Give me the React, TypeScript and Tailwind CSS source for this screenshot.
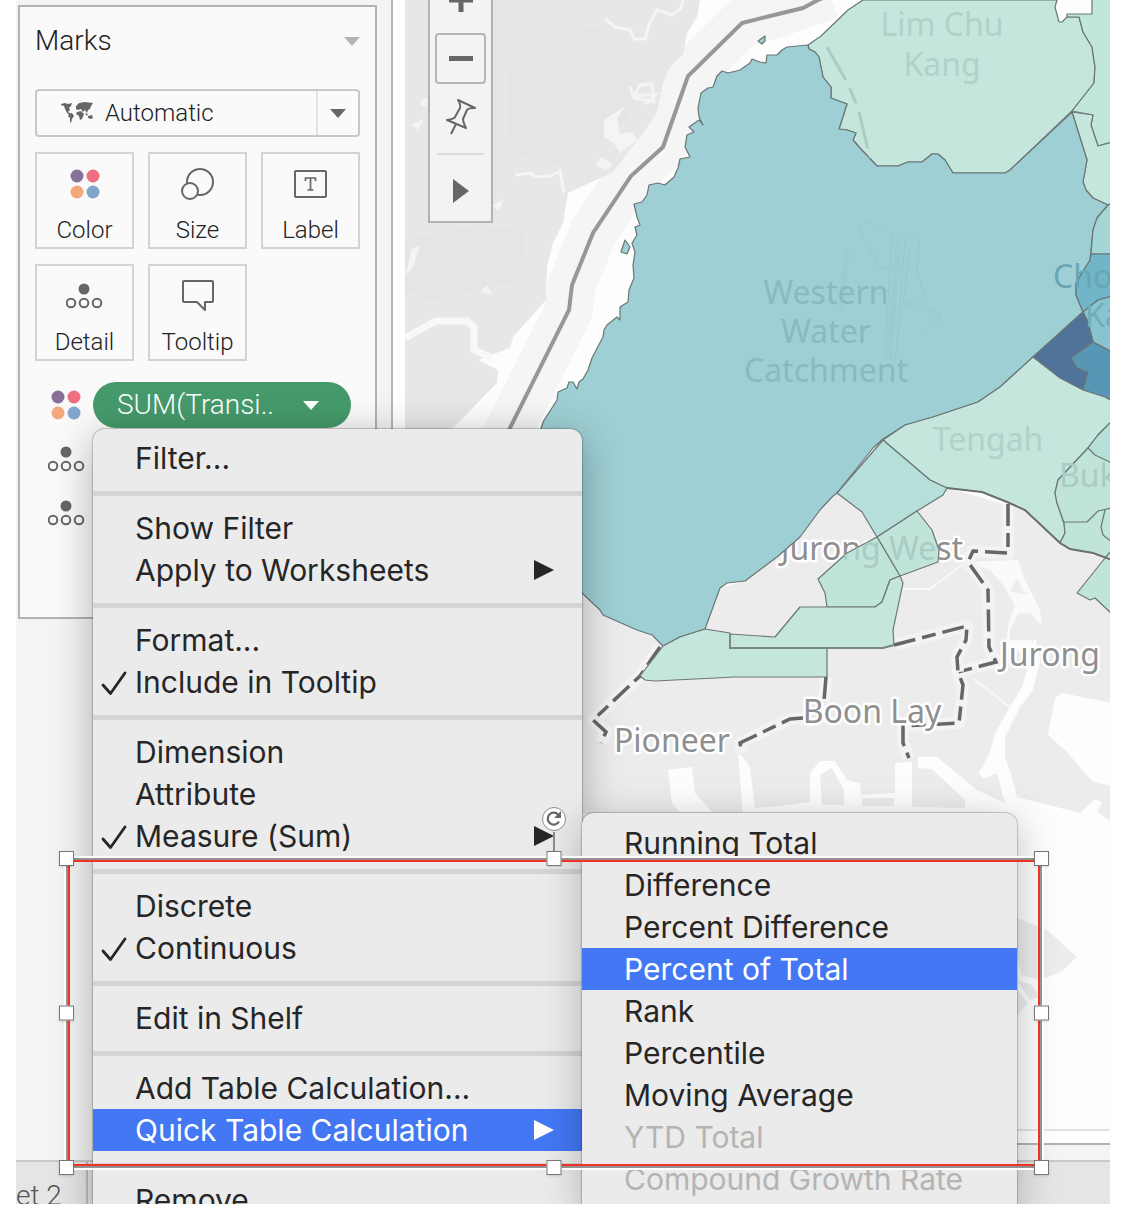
import React, { useState } from 'react';

interface MenuEntry {
  label: string;
  checked?: boolean;
  submenu?: boolean;
  disabled?: boolean;
}

const menuGroups: MenuEntry[][] = [
  [{ label: 'Filter...' }],
  [{ label: 'Show Filter' }, { label: 'Apply to Worksheets', submenu: true }],
  [{ label: 'Format...' }, { label: 'Include in Tooltip', checked: true }],
  [{ label: 'Dimension' }, { label: 'Attribute' }, { label: 'Measure (Sum)', checked: true, submenu: true }],
  [{ label: 'Discrete' }, { label: 'Continuous', checked: true }],
  [{ label: 'Edit in Shelf' }],
  [{ label: 'Add Table Calculation...' }, { label: 'Quick Table Calculation', submenu: true }],
  [{ label: 'Remove' }],
];

const calculations: MenuEntry[] = [
  { label: 'Running Total' },
  { label: 'Difference' },
  { label: 'Percent Difference' },
  { label: 'Percent of Total' },
  { label: 'Rank' },
  { label: 'Percentile' },
  { label: 'Moving Average' },
  { label: 'YTD Total', disabled: true },
  { label: 'Compound Growth Rate', disabled: true },
];

const ColorIcon = () => (
  <svg width="30" height="30" viewBox="0 0 30 30" aria-hidden="true">
    <circle cx="7" cy="7" r="6.5" fill="#866f98" />
    <circle cx="23" cy="7" r="6.5" fill="#ee6f80" />
    <circle cx="7" cy="23" r="6.5" fill="#f2a77d" />
    <circle cx="23" cy="23" r="6.5" fill="#82a5cb" />
  </svg>
);

const SizeIcon = () => (
  <svg width="34" height="32" viewBox="0 0 34 32" fill="none" stroke="#666" strokeWidth="2" aria-hidden="true">
    <circle cx="19" cy="14" r="13" />
    <circle cx="9" cy="23" r="8" fill="#fafafa" />
  </svg>
);

const LabelIcon = () => (
  <svg width="34" height="30" viewBox="0 0 34 30" fill="none" stroke="#666" strokeWidth="2" aria-hidden="true">
    <rect x="1" y="2" width="31" height="26" rx="1" />
    <path d="M11.500 12V9h10v3M16.500 9v12M13.500 21h6" strokeWidth="1.700" />
  </svg>
);

const DetailIcon = () => (
  <svg width="38" height="26" viewBox="0 0 38 26" fill="none" stroke="#666" strokeWidth="2" aria-hidden="true">
    <circle cx="18" cy="6" r="5.500" fill="#666" stroke="none" />
    <circle cx="5" cy="20" r="4.300" />
    <circle cx="18" cy="20" r="4.300" />
    <circle cx="31" cy="20" r="4.300" />
  </svg>
);

const TooltipIcon = () => (
  <svg width="34" height="32" viewBox="0 0 34 32" fill="none" stroke="#666" strokeWidth="2" strokeLinejoin="round" aria-hidden="true">
    <path d="M3 1h28q1 0 1 1v19q0 1-1 1h-7v8l-8-8H3q-1 0-1-1V2q0-1 1-1z" />
  </svg>
);

const WorldIcon = () => (
  <svg width="32" height="22" viewBox="0 0 32 22" fill="#666" aria-hidden="true">
    <path d="M0 2l4-1 3 1 4-1-1 3-2 2 1 2-2 2 3 2-1 1-3-2-2-4-1-3-3-1zM8 12l3-1 2 3-2 3-1 4-1-1v-4l-2-2zM15 4l3-3 6-1 8 1-2 3-1 3-2 1-1 3-2-3-2 2-2-3-3 1-2-1zM16 10l4-1 3 3-2 5-2 1-1-4-3-2zM27 14l4-1 1 3-2 1-3-1zM24 11l3 1-1 2z" />
  </svg>
);

const CaretDown = ({ className }: { className: string }) => (
  <svg width="16" height="9" viewBox="0 0 16 9" fill="currentColor" className={className} aria-hidden="true">
    <path d="M0 0h16L8 9z" />
  </svg>
);

const Check = () => (
  <svg width="26" height="30" viewBox="0 0 26 30" fill="none" stroke="currentColor" strokeWidth="2.800" strokeLinecap="round" strokeLinejoin="round" aria-hidden="true">
    <path d="M2 18l7.500 8.500L24 6" />
  </svg>
);

const ArrowRight = () => (
  <svg width="20" height="20" viewBox="0 0 20 20" fill="currentColor" aria-hidden="true">
    <path d="M0 0l20 10L0 20z" />
  </svg>
);

const PinIcon = () => (
  <svg width="32" height="38" viewBox="0 0 32 38" fill="none" stroke="#666" strokeWidth="2" strokeLinejoin="round" aria-hidden="true">
    <path d="M13 2l17 8q-7 0-8 2l-4 9q0 3 3 9L2 22q7-1 8-3l5-9q1-3-2-8zM11 26L6 36" />
  </svg>
);

const shelfButtons = [
  { label: 'Color', icon: <ColorIcon /> },
  { label: 'Size', icon: <SizeIcon /> },
  { label: 'Label', icon: <LabelIcon /> },
  { label: 'Detail', icon: <DetailIcon /> },
  { label: 'Tooltip', icon: <TooltipIcon /> },
];

// planning areas, drawn in order with a shared outline
const areas = [
  { fill: '#c4e6dc', points: '808,45 821,36 848,10 863,0 1057,0 1055,7 1059,22 1062,22 1067,17 1079,17 1083,32 1092,47 1095,67 1094,83 1072,111 1010,170 1005,173 953,173 945,160 938,154 932,154 922,162 908,162 898,166 877,166 860,148 853,140 856,133 847,130 839,129 847,104 831,98 831,87 823,77 819,57 815,52 809,49' },
  { fill: '#c1e6da', points: '1092,-2 1092,14 1067,14 1067,17 1079,17 1083,32 1092,47 1095,67 1094,83 1072,111 1093,115 1091,125 1098,146 1112,142 1112,-2' },
  { fill: '#c4e6dc', points: '1072,112 1093,115 1091,125 1098,146 1112,142 1112,205 1108,205 1093,198 1086,190 1083,182 1087,160' },
  { fill: '#9ecfd4', points: '808,45 787,47 782,50 777,55 767,55 766,63 760,62 752,59 750,63 740,70 728,73 722,71 717,76 713,87 708,88 701,93 698,108 699,117 703,125 699,120 689,127 694,132 687,135 685,147 690,157 680,159 678,168 674,177 665,185 658,183 649,185 647,195 642,202 634,204 637,217 640,225 635,227 637,235 632,243 635,252 633,265 634,278 629,290 628,302 620,307 620,320 617,317 607,325 604,330 603,337 592,358 588,370 583,379 579,382 577,389 573,382 569,382 567,388 558,392 557,400 543,422 535,450 560,570 582,593 600,610 603,615 637,630 652,635 663,646 680,637 705,629 720,588 727,583 745,581 777,557 800,537 820,510 832,497 837,493 873,448 883,439 905,425 933,417 978,402 1000,387 1033,357 1083,312 1076,295 1076,283 1090,260 1093,230 1097,218 1108,205 1093,198 1086,190 1083,182 1087,160 1072,112 1010,170 1005,173 953,173 945,160 938,154 932,154 922,162 908,162 898,166 877,166 860,148 853,140 856,133 847,130 839,129 847,104 831,98 831,87 823,77 819,57 815,52 809,49' },
  { fill: '#a3d6d4', points: '1108,205 1112,203 1112,254 1091,254 1093,230 1097,218' },
  { fill: '#70b5c8', points: '1091,254 1112,254 1112,296 1098,300 1083,312 1076,295 1076,283 1090,260' },
  { fill: '#88c4d0', points: '1083,312 1098,300 1112,296 1112,352 1093,342 1088,322' },
  { fill: '#4f7399', points: '1083,312 1088,322 1093,342 1071,358 1077,368 1088,372 1083,390 1060,378 1033,357' },
  { fill: '#5796b5', points: '1093,342 1112,352 1112,400 1083,390 1088,372 1077,368 1071,358' },
  { fill: '#c5e6dc', points: '1033,357 1060,378 1083,390 1105,397 1112,401 1112,421 1098,435 1088,448 1058,480 1055,493 1057,503 1064,523 1065,533 1060,543 1025,510 1007,502 982,492 947,488 930,480 883,440 905,425 933,417 978,402 1000,387' },
  { fill: '#c1e4da', points: '1112,421 1098,435 1088,448 1058,480 1055,493 1057,503 1064,523 1065,533 1060,543 1070,549 1093,553 1112,560' },
  { fill: '#b7dfd9', points: '1112,421 1098,435 1088,448 1095,455 1112,463' },
  { fill: '#c1e4da', points: '1105,558 1077,593 1090,600 1095,598 1112,614 1112,550' },
  { fill: '#b7dfd9', points: '883,440 930,480 947,488 943,495 917,511 877,537 862,512 837,493' },
  { fill: '#c1e4da', points: '917,511 932,530 939,550 938,562 900,576 877,537' },
  { fill: '#c1e4da', points: '877,537 847,553 818,579 825,593 827,607 875,607 882,602 890,580 900,576' },
  { fill: '#c5e6dc', points: '900,576 903,583 893,630 894,645 883,648 730,648 730,634 775,637 800,607 875,607 882,602 890,580' },
  { fill: '#c5e6dc', points: '663,646 680,637 705,629 730,633 730,648 827,648 827,677 735,677 655,681 645,680 640,676' },
  { fill: '#9ecfd4', points: '758,41 765,36 765,41 762,44' },
  { fill: '#9ecfd4', points: '621,252 625,240 630,247 627,254' },
];

const borders = [
  '1064,522 1087,522 1098,511 1112,508',
  '1105,510 1101,527 1103,535 1112,542',
];

const dashes = [
  '1008,504 1008,553 973,551 968,562 988,590 989,647 996,662 958,672 963,685 959,723 903,726 903,743 909,758',
  '894,645 967,626 966,640 957,657 958,672',
  '826,677 824,701',
  '803,718 790,719 740,743 742,753',
  '660,647 640,676 593,720 606,732 601,743',
];

const faintLabels = [
  { x: 942, y: 36, text: 'Lim Chu', fill: '#afd2c9' },
  { x: 942, y: 76, text: 'Kang', fill: '#afd2c9' },
  { x: 826, y: 304, text: 'Western', fill: '#89babf' },
  { x: 826, y: 343, text: 'Water', fill: '#89babf' },
  { x: 826, y: 382, text: 'Catchment', fill: '#89babf' },
  { x: 988, y: 451, text: 'Tengah', fill: '#afd2c9' },
];

const MapCanvas = () => (
  <svg
    viewBox="405 0 705 1129"
    preserveAspectRatio="xMinYMin slice"
    className="block min-h-0 w-full flex-1 bg-[#fdfdfd] font-['Noto_Sans',sans-serif] text-[32px]"
    role="img"
    aria-label="Map of western Singapore"
  >
    <defs>
      <clipPath id="west">
        <path d="M877 537L917 511 932 530 939 550 938 562 900 576 875 607H827L825 593 818 579 847 553z" />
      </clipPath>
    </defs>

    <polyline points="830,-5 770,16 742,23 688,76 663,147 631,176 593,233 572,285 569,310 500,448" fill="none" stroke="#f5f5f5" strokeWidth="48" />
    <path d="M405 0H700L697 17 687 33 683 55 670 67 663 83 657 113 640 137 613 172 568 193 563 223 553 243 547 267 546 300 513 337 510 348 478 360 498 370 497 383 453 428 405 460z" fill="#e7e7e7" />
    <path d="M510 70L558 20 600 30 650 70 620 130 560 165 505 150zM405 240L480 225 525 232 520 280 430 300 405 290z" fill="#e5e5e5" />
    <path d="M405 338L436 321H467L474 327V350L492 358" fill="none" stroke="#f8f8f8" strokeWidth="7" />
    <path d="M515 175L530 173 535 177 550 176 560 171 564 193M605 19L615 27 630 30 634 39H645L650 22 657 10 672 15 681 8 683 0" fill="none" stroke="#f5f5f5" strokeWidth="3" />
    <path d="M604 120L625 106 617 118 620 134 632 132 637 140 620 153 613 142 604 137zM595 165L602 157 613 165 606 170zM493 205L504 199 499 211zM412 125L425 118 418 130zM480 292L487 285 492 295zM421 100L427 98V107L421 106zM406 275L412 248 420 246 414 265z" fill="#f4f4f4" />
    <path d="M630 86L634 98 654 102 652 84 640 85 634 96 656 94 646 104" fill="none" stroke="#f4f4f4" strokeWidth="3" />

    <path d="M560 560L663 646 705 629 720 588 745 581 777 557 883 439 947 488 1025 510 1070 549 1112 560V703L1062 693 1055 698 1048 735 1067 752 1093 782 1112 786V822L1097 812 1102 802 1095 799 1080 813 1017 797 1010 812 965 814H560z" fill="#ececec" />
    <path d="M668 770L692 767 695 793 712 812H680L672 803zM738 753L744 758 750 768 755 808 780 806 810 802V773L820 761H835L847 780 860 783 861 795 895 793V763L912 762V807L965 808V800L932 769 918 768V757H937L977 790 1005 803 997 773 983 779 979 773 990 753 995 733 1010 707 1022 687 1030 660 1033 640H1036L1040 660 1033 690 1020 707 1005 737V757L1012 777 1017 797 1020 816H743z" fill="#fdfdfd" />
    <path d="M820 775L832 768 844 790V805H822zM862 798H894V806H862z" fill="#ececec" />
    <path d="M968 562L1018 560 1025 580 1040 610 1042 626 1030 613 1018 614 1010 630V640H1030L1036 645 1033 655 1006 648 1008 625 1015 605 1003 585 990 570z" fill="#fafafa" />
    <path d="M903 589H930L962 565M974 679L1010 707" fill="none" stroke="#f9f9f9" strokeWidth="2" />
    <path d="M1010 590L1018 578 1022 590 1030 595 1012 592z" fill="#ececec" />
    <path d="M1010 915L1047 930 1077 957 1061 972 1040 980 1021 975zM1017 980L1032 985 1040 997 1030 1000zM1017 990L1028 1003 1017 1015z" fill="#ececec" />
    <path d="M1067 -2H1092V14H1067z" fill="#fdfdfd" />

    {dashes.map((points) => (
      <g key={points} fill="none">
        <polyline points={points} stroke="#f3f3f3" strokeWidth="12" strokeLinejoin="round" />
        <polyline points={points} stroke="#666" strokeWidth="3.500" strokeDasharray="22 7 14 7" />
      </g>
    ))}

    <g fill="#8f8f8f" stroke="#fff" strokeWidth="5" strokeLinejoin="round" paintOrder="stroke" textAnchor="middle">
      <text x="872" y="560">Jurong West</text>
      <text x="672" y="752">Pioneer</text>
      <text x="872" y="723">Boon Lay</text>
      <text x="1050" y="666">Jurong</text>
    </g>

    <g stroke="#6b7575" strokeWidth="1.200" strokeLinejoin="round">
      {areas.map((area) => (
        <polygon key={area.points} points={area.points} fill={area.fill} />
      ))}
      {borders.map((points) => (
        <polyline key={points} points={points} fill="none" />
      ))}
    </g>

    <g fill="none" stroke="#96c8ce" strokeWidth="1">
      <path d="M858 228L868 221 892 235H920L917 270 924 295 905 304 940 314 938 322 922 333M858 228L880 268 903 270M892 235L885 355M905 240L895 365M910 250L898 340" />
      <path d="M847 250L841 310M899 237L889 360" strokeWidth="6" opacity="0.400" />
    </g>

    <polyline points="824,42 847,82 858,108 870,158" fill="none" stroke="#a9cdc2" strokeWidth="3" strokeDasharray="38 9 16 9" strokeDashoffset="-6" />
    <polyline points="830,-5 818,0 803,8 770,16 742,23 688,76 663,147 631,176 593,233 572,285 569,310 500,448" fill="none" stroke="#979797" strokeWidth="4" />
    <polyline points="947,488 982,492 1007,502 1025,510 1060,543 1070,549 1093,553 1112,560" fill="none" stroke="#6b6f6e" strokeWidth="2" />
    <polyline points="730,634 730,648 883,648 894,645" fill="none" stroke="#7b8985" strokeWidth="2" />

    <g textAnchor="middle">
      {faintLabels.map((label) => (
        <text key={label.text} x={label.x} y={label.y} fill={label.fill}>{label.text}</text>
      ))}
      <text x="872" y="560" fill="#a9ccc3" clipPath="url(#west)">Jurong West</text>
    </g>
    <text x="1053" y="288" fill="#68a6b4">Cho</text>
    <text x="1085" y="327" fill="#70adba">Ka</text>
    <text x="1059" y="487" fill="#a9ccc3">Buk</text>
  </svg>
);

const MapToolbar = () => (
  <div className="absolute -top-3 left-[35px] flex w-[65px] flex-col items-center border-2 border-[#b2b2b2] bg-[#f3f3f3] pb-[18px]">
    <button type="button" aria-label="Zoom in" className="flex h-[43px] w-[51px] items-start justify-center">
      <svg width="24" height="24" viewBox="0 0 24 24" stroke="#666" strokeWidth="5" aria-hidden="true">
        <path d="M0 10h24M12 0v22" />
      </svg>
    </button>
    <button type="button" aria-label="Zoom out" className="flex h-[51px] w-[51px] items-center justify-center rounded border-2 border-[#b5b5b5]">
      <svg width="24" height="5" viewBox="0 0 24 5" aria-hidden="true">
        <path d="M0 0h24v5H0z" fill="#666" />
      </svg>
    </button>
    <button type="button" aria-label="Pin" className="flex h-[69px] w-[51px] items-start justify-center pt-[14px]">
      <PinIcon />
    </button>
    <div className="h-[2px] w-[47px] bg-[#dcdcdc]" />
    <button type="button" aria-label="More tools" className="mt-6 flex w-[51px] justify-center">
      <svg width="16" height="24" viewBox="0 0 16 24" aria-hidden="true">
        <path d="M0 0l16 12L0 24z" fill="#666" />
      </svg>
    </button>
  </div>
);

interface MenuItemProps {
  entry: MenuEntry;
  active: boolean;
}

const MenuItem: React.FC<MenuItemProps> = ({ entry, active }) => (
  <button
    type="button"
    role="menuitem"
    disabled={entry.disabled}
    className={`flex h-[42px] w-full items-center pr-7 pl-2 text-left text-[30px] leading-[42px] whitespace-nowrap disabled:text-[#b4b4b4] ${active ? 'bg-[#4377f4] text-white' : 'text-[#262626]'}`}
  >
    <span className="w-[34px] shrink-0">{entry.checked && <Check />}</span>
    <span className="flex-1">{entry.label}</span>
    {entry.submenu && <ArrowRight />}
  </button>
);

const handles = [
  '-top-[9px] -left-[9px]',
  '-top-[9px] left-1/2 -translate-x-1/2',
  '-top-[9px] -right-[9px]',
  'top-1/2 -left-[9px] -translate-y-1/2',
  'top-1/2 -right-[9px] -translate-y-1/2',
  '-bottom-[9px] -left-[9px]',
  '-bottom-[9px] left-1/2 -translate-x-1/2',
  '-right-[9px] -bottom-[9px]',
];

const Annotation = () => (
  <div className="pointer-events-none absolute top-[858px] left-[50px] h-[310px] w-[976px] border-2 border-[#929292] shadow-[0_0_0_2px_#fff,inset_0_0_0_2px_#ee3326]">
    <div className="absolute -top-7 left-1/2 h-6 w-[2px] -translate-x-1/2 bg-[#8a8a8a]" />
    <div className="absolute -top-[53px] left-1/2 flex h-6 w-6 -translate-x-1/2 items-center justify-center rounded-full border border-[#8a8a8a] bg-white">
      <svg width="16" height="16" viewBox="0 0 16 16" fill="none" stroke="#666" strokeWidth="2.200" aria-hidden="true">
        <path d="M13 10.500A6 6 0 1 1 12.500 4" />
        <path d="M15 0v7H8z" fill="#666" stroke="none" />
      </svg>
    </div>
    {handles.map((position) => (
      <span key={position} className={`absolute h-[15px] w-[15px] border border-[#777] bg-white shadow ${position}`} />
    ))}
  </div>
);

const App: React.FC = () => {
  const [markType, setMarkType] = useState('Automatic');

  return (
    <div className="h-screen overflow-hidden bg-white pr-5 pb-[10px] pl-4 font-['Roboto',sans-serif] text-[#222]">
      <div className="relative flex h-full flex-col overflow-hidden bg-[#f4f4f4]">
        <main className="flex min-h-0 flex-1">
          <aside className="w-[377px] shrink-0 border-r-2 border-[#b5b5b5] pt-[5px] pr-[14px] pl-[2px]">
            <section className="border-2 border-[#b2b2b2] bg-[#fafafa] px-[15px] pb-[81px]">
              <header className="flex h-[82px] items-center justify-between pb-[14px]">
                <h2 className="text-[28px] leading-9 font-light">Marks</h2>
                <CaretDown className="text-[#b3b3b3]" />
              </header>

              <div className="relative flex h-12 items-center rounded border-2 border-[#c8c8c8]">
                <span className="pointer-events-none absolute left-6"><WorldIcon /></span>
                <select
                  aria-label="Mark type"
                  value={markType}
                  onChange={(e) => setMarkType(e.target.value)}
                  className="h-full w-full appearance-none bg-transparent pl-[68px] text-2xl font-light focus:outline-none"
                >
                  <option>Automatic</option>
                </select>
                <span className="pointer-events-none absolute right-0 flex h-full w-[42px] items-center justify-center border-l-2 border-[#e2e2e2]">
                  <CaretDown className="text-[#666]" />
                </span>
              </div>

              <div className="mt-[15px] grid grid-cols-3 gap-x-[14px] gap-y-[15px]">
                {shelfButtons.map((item) => (
                  <button key={item.label} type="button" className="flex h-[97px] flex-col items-center border-2 border-[#d3d3d3] pt-3">
                    <span className="flex h-9 items-center">{item.icon}</span>
                    <span className="mt-3 text-2xl leading-8 font-light">{item.label}</span>
                  </button>
                ))}
              </div>

              <div className="mt-[21px] flex flex-col gap-2">
                <div className="flex h-[46px] items-center justify-between pr-[9px] pl-4">
                  <ColorIcon />
                  <button type="button" className="flex h-full w-[258px] shrink-0 items-center justify-between rounded-full bg-[#459a6b] pr-8 pl-6 text-[28px] font-light text-white">
                    SUM(Transi..
                    <CaretDown className="text-white" />
                  </button>
                </div>
                <div className="flex h-[46px] w-16 items-center justify-center"><DetailIcon /></div>
                <div className="flex h-[46px] w-16 items-center justify-center"><DetailIcon /></div>
              </div>
            </section>
          </aside>

          <section className="flex min-w-0 flex-1 flex-col">
            <div className="relative flex min-h-0 flex-1 flex-col bg-white pl-3">
              <MapCanvas />
              <MapToolbar />
              <div className="-ml-3 h-4 border-t-2 border-b-2 border-t-[#e3e3e3] border-b-[#b3b3b3]" />
            </div>
            <div className="h-[15px] shrink-0" />
          </section>
        </main>

        <footer className="flex h-11 shrink-0 border-t-2 border-[#c9c9c9] bg-[#e5e5e5]">
          <button type="button" className="w-[72px] border-r-2 border-[#bdbdbd] pt-4 text-left text-[28px] leading-9 font-light text-[#555]">et 2</button>
        </footer>

        <div role="menu" className="absolute top-[429px] left-[77px] w-[489px] rounded-t-xl bg-[#ebebeb] pt-2 font-['Inter',sans-serif] shadow-[0_8px_40px_rgba(0,0,0,0.3),0_0_1px_1px_rgba(0,0,0,0.2)]">
          {menuGroups.map((group, index) => (
            <React.Fragment key={group[0].label}>
              {index > 0 && <div role="separator" className="mt-3 mb-[11px] h-[5px] bg-[#d4d4d4]" />}
              {group.map((entry) => (
                <MenuItem key={entry.label} entry={entry} active={entry.label === 'Quick Table Calculation'} />
              ))}
            </React.Fragment>
          ))}
        </div>

        <div role="menu" className="absolute top-[813px] left-[566px] w-[435px] rounded-t-xl bg-[#ebebeb] pt-[9px] pb-3 font-['Inter',sans-serif] shadow-[0_8px_40px_rgba(0,0,0,0.25),0_0_1px_1px_rgba(0,0,0,0.2)]">
          {calculations.map((entry) => (
            <MenuItem key={entry.label} entry={entry} active={entry.label === 'Percent of Total'} />
          ))}
        </div>

        <Annotation />
      </div>
    </div>
  );
};

export default App;
